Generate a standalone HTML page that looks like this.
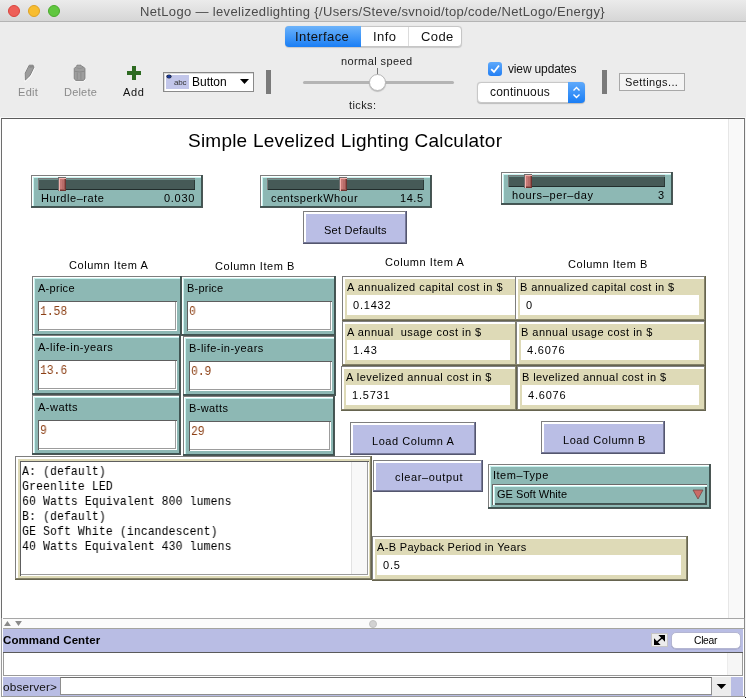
<!DOCTYPE html>
<html><head><meta charset="utf-8">
<style>
*{box-sizing:border-box;margin:0;padding:0}
html,body{width:746px;height:698px;overflow:hidden;background:#ececec;font-family:"Liberation Sans",sans-serif;color:#000}
.a{position:absolute}
.t{position:absolute;white-space:nowrap;will-change:transform}
.lbl{position:absolute;font-size:11px;white-space:nowrap;line-height:13px;letter-spacing:0.4px;will-change:transform}
#titlebar{left:0;top:0;width:746px;height:22px;background:linear-gradient(#ebebeb,#d6d6d6);border-bottom:1px solid #b4b4b4}
.dot{position:absolute;top:5px;width:12px;height:12px;border-radius:50%}
#title{left:140px;top:4px;white-space:nowrap;font-size:13px;letter-spacing:0.34px;color:#4a4a4a;will-change:transform}
#panel{left:1px;top:118px;width:744px;height:501px;background:#fff;border-top:1px solid #5c5c5c;border-left:1px solid #6e6e6e;border-right:1px solid #777}
</style></head><body>
<div id="titlebar" class="a"></div>
<div class="dot" style="left:8px;background:#ee5f58;border:1px solid #d9443d"></div>
<div class="dot" style="left:28px;background:#f8bd2f;border:1px solid #dea224"></div>
<div class="dot" style="left:48px;background:#60c73f;border:1px solid #4aaa2c"></div>
<div id="title" class="a">NetLogo — levelizedlighting {/Users/Steve/svnoid/top/code/NetLogo/Energy}</div>
<!-- toolbar -->
<svg class="a" style="left:18px;top:60px" width="24" height="24" viewBox="18 60 24 24">
  <path d="M25.4 80.6 L25.2 73.6 L29.2 65.6 L33.1 65.6 L34.4 67.6 L30.4 76 Z" fill="none" stroke="#fff" stroke-width="1.6" opacity="0.8"/>
  <path d="M25.4 80 L25.2 73.2 L29.2 65.2 L33.1 65.2 L34 67.2 L30 75.5 Z" fill="#9c9c9c" stroke="#7c7c7c" stroke-width="0.9"/>
  <path d="M29.6 66 L33 66 L33.4 67.3 L29.3 68 Z" fill="#8a8a8a"/>
</svg>
<div class="lbl" style="left:18px;top:86px;font-size:11px;line-height:13px;letter-spacing:0.3px;color:#8a8a8a">Edit</div>
<svg class="a" style="left:68px;top:60px" width="24" height="24" viewBox="68 60 24 24">
  <path d="M77 65.6 L81 65.6 L81.5 66.6 L83.6 67.4 L85.2 69 L85.2 79 L83.6 80.8 L75.6 80.8 L74.2 79 L74.2 69 L75.6 67.4 L76.6 66.6 Z" fill="none" stroke="#fff" stroke-width="1.4" opacity="0.8"/>
  <path d="M77 65.2 L81 65.2 L81.5 66.2 L83.6 67 L85 68.6 L85 78.8 L83.4 80.4 L75.8 80.4 L74.2 78.8 L74.2 68.6 L75.6 67 L76.6 66.2 Z" fill="#9e9e9e" stroke="#7a7a7a" stroke-width="0.9"/>
  <path d="M74.6 71.3 Q79.6 72.6 84.6 71.3" stroke="#858585" stroke-width="0.8" fill="none"/>
  <path d="M77.3 72.5 L77.3 79.5 M80.9 72.5 L80.9 79.5" stroke="#888" stroke-width="0.8"/>
  <path d="M76.5 67.8 Q79.6 69.4 82.8 67.8" stroke="#8a8a8a" stroke-width="0.7" fill="none"/>
</svg>
<div class="lbl" style="left:64px;top:86px;font-size:11px;line-height:13px;letter-spacing:0.2px;color:#8a8a8a">Delete</div>
<div class="a" style="left:127px;top:71px;width:14px;height:4px;background:#2e6b22"></div>
<div class="a" style="left:132px;top:66px;width:4px;height:14px;background:#2e6b22"></div>
<div class="lbl" style="left:123px;top:86px;font-size:11px;line-height:13px;letter-spacing:0.6px;color:#111">Add</div>

<div class="a" style="left:163px;top:72px;width:91px;height:20px;background:#fff;border:1px solid #8a8a8a;box-shadow:inset 1px 1px 0 #dcdcdc"></div>
<div class="a" style="left:166px;top:75px;width:23px;height:14px;background:#c2c6ea"></div>
<div class="a" style="left:167px;top:75px;width:4px;height:3px;background:#1a3a9a;border-radius:50%;box-shadow:0 0 0 0.6px #222"></div>
<div class="lbl" style="left:173.5px;top:78.3px;font-size:8px;line-height:10px;letter-spacing:-0.15px;color:#333">abc</div>
<div class="lbl" style="left:192px;top:75px;font-size:12px;line-height:14px;letter-spacing:0">Button</div>
<svg class="a" style="left:240px;top:79px" width="10" height="6"><path d="M0 0 L9 0 L4.5 5 Z" fill="#000"/></svg>
<div class="a" style="left:266px;top:70px;width:5px;height:24px;background:#7a7a7a"></div>

<!-- tabs -->
<div class="a" style="left:285px;top:26px;width:177px;height:21px;background:#fff;border:1px solid #c6c6c6;border-radius:4px;box-shadow:0 0.5px 1px rgba(0,0,0,0.15)"></div>
<div class="a" style="left:285px;top:26px;width:76px;height:21px;background:linear-gradient(#6cb3fa,#1a7ef5);border-radius:4px 0 0 4px"></div>
<div class="a" style="left:408px;top:27px;width:1px;height:19px;background:#dcdcdc"></div>
<div class="lbl" style="left:295px;top:29px;font-size:13px;line-height:15px;color:#111">Interface</div>
<div class="lbl" style="left:373px;top:29px;font-size:13px;line-height:15px;color:#111">Info</div>
<div class="lbl" style="left:421px;top:29px;font-size:13px;line-height:15px;color:#111">Code</div>

<!-- speed slider -->
<div class="lbl" style="left:341px;top:55px;font-size:11px;color:#222">normal speed</div>
<div class="a" style="left:303px;top:81px;width:151px;height:3px;background:#b4b4b4;border-radius:2px"></div>
<div class="a" style="left:377px;top:68px;width:1px;height:7px;background:#777"></div>
<div class="a" style="left:369px;top:74px;width:17px;height:17px;border-radius:50%;background:#fff;border:1px solid #b8b8b8;box-shadow:0 1px 1px rgba(0,0,0,0.2)"></div>
<div class="lbl" style="left:349px;top:98.5px;font-size:11px;color:#222">ticks:</div>

<!-- view updates -->
<div class="a" style="left:488px;top:62px;width:14px;height:14px;border-radius:3px;background:linear-gradient(#5ea9fb,#237ff4)"></div>
<svg class="a" style="left:488px;top:62px" width="14" height="14"><path d="M3.2 7.2 L6 10 L11 3.5" stroke="#fff" stroke-width="1.8" fill="none"/></svg>
<div class="lbl" style="left:508px;top:62px;font-size:12px;line-height:14px;letter-spacing:-0.15px;color:#111">view updates</div>
<div class="a" style="left:477px;top:82px;width:108px;height:21px;background:#fff;border:1px solid #c8c8c8;border-radius:4px;box-shadow:0 0.5px 1px rgba(0,0,0,0.2)"></div>
<div class="a" style="left:568px;top:82px;width:17px;height:21px;background:linear-gradient(#5ea9fb,#1a7ef5);border-radius:0 4px 4px 0"></div>
<svg class="a" style="left:571px;top:85px" width="11" height="15"><path d="M2.5 5.5 L5.5 2.5 L8.5 5.5 M2.5 9.5 L5.5 12.5 L8.5 9.5" stroke="#fff" stroke-width="1.4" fill="none"/></svg>
<div class="lbl" style="left:490px;top:85px;font-size:12px;line-height:14px;letter-spacing:0.2px;color:#111">continuous</div>
<div class="a" style="left:602px;top:70px;width:5px;height:24px;background:#7a7a7a"></div>
<div class="a" style="left:619px;top:73px;width:66px;height:18px;background:#f4f4f4;border:1px solid #a8a8a8"></div>
<div class="lbl" style="left:625px;top:76px;font-size:11px;line-height:13px;letter-spacing:0.4px;color:#111">Settings...</div>



<div id="panel" class="a"></div>
<div class="t" style="left:187.8px;top:129.22px;font-size:19px;line-height:24px;letter-spacing:0.22px;color:#000;">Simple Levelized Lighting Calculator</div>
<div class="a" style="left:31px;top:175px;width:172px;height:33px;background:#8db8b4;box-shadow:inset -1px -1px 0 #4b5654, inset -2px -2px 0 #3f5553, inset 1px 1px 0 #7e7e7e, inset 2px 2px 0 #fff, inset 3px 3px 0 #c8f4f0"></div>
<div class="a" style="left:38px;top:178px;width:157px;height:12px;background:#465a57;box-shadow:inset 1px 1px 0 #7a7a7a, inset 0 2px 0 #6f918d, inset 0 -1px 0 #222d2c, inset -1px 0 0 #2c3a38"></div>
<div class="a" style="left:58px;top:177px;width:8px;height:14px;background:#c67976;box-shadow:inset 1px 1px 0 #6e6e6e, inset 2px 2px 0 #f6b3ae, inset -1px -1px 0 #6e3431, inset -2px -2px 0 #9d5652"></div>
<div class="a" style="left:62px;top:180px;width:2px;height:9px;background:#b86c69"></div>
<div class="t" style="left:41.4px;top:190.59px;font-size:11px;line-height:14px;letter-spacing:0.55px;color:#000;">Hurdle&#8211;rate</div>
<div class="t" style="right:551px;top:190.59px;font-size:11px;line-height:14px;letter-spacing:0.7px;color:#000;">0.030</div>
<div class="a" style="left:260px;top:175px;width:172px;height:33px;background:#8db8b4;box-shadow:inset -1px -1px 0 #4b5654, inset -2px -2px 0 #3f5553, inset 1px 1px 0 #7e7e7e, inset 2px 2px 0 #fff, inset 3px 3px 0 #c8f4f0"></div>
<div class="a" style="left:267px;top:178px;width:157px;height:12px;background:#465a57;box-shadow:inset 1px 1px 0 #7a7a7a, inset 0 2px 0 #6f918d, inset 0 -1px 0 #222d2c, inset -1px 0 0 #2c3a38"></div>
<div class="a" style="left:339px;top:177px;width:8px;height:14px;background:#c67976;box-shadow:inset 1px 1px 0 #6e6e6e, inset 2px 2px 0 #f6b3ae, inset -1px -1px 0 #6e3431, inset -2px -2px 0 #9d5652"></div>
<div class="a" style="left:343px;top:180px;width:2px;height:9px;background:#b86c69"></div>
<div class="t" style="left:270.9px;top:190.59px;font-size:11px;line-height:14px;letter-spacing:0.5px;color:#000;">centsperkWhour</div>
<div class="t" style="right:322.6px;top:190.59px;font-size:11px;line-height:14px;letter-spacing:0.55px;color:#000;">14.5</div>
<div class="a" style="left:501px;top:172px;width:172px;height:33px;background:#8db8b4;box-shadow:inset -1px -1px 0 #4b5654, inset -2px -2px 0 #3f5553, inset 1px 1px 0 #7e7e7e, inset 2px 2px 0 #fff, inset 3px 3px 0 #c8f4f0"></div>
<div class="a" style="left:508px;top:175px;width:157px;height:12px;background:#465a57;box-shadow:inset 1px 1px 0 #7a7a7a, inset 0 2px 0 #6f918d, inset 0 -1px 0 #222d2c, inset -1px 0 0 #2c3a38"></div>
<div class="a" style="left:524px;top:174px;width:8px;height:14px;background:#c67976;box-shadow:inset 1px 1px 0 #6e6e6e, inset 2px 2px 0 #f6b3ae, inset -1px -1px 0 #6e3431, inset -2px -2px 0 #9d5652"></div>
<div class="a" style="left:528px;top:177px;width:2px;height:9px;background:#b86c69"></div>
<div class="t" style="left:511.6px;top:187.59px;font-size:11px;line-height:14px;letter-spacing:0.64px;color:#000;">hours&#8211;per&#8211;day</div>
<div class="t" style="right:81.60000000000002px;top:187.59px;font-size:11px;line-height:14px;letter-spacing:0.55px;color:#000;">3</div>
<div class="a" style="left:303px;top:211px;width:104px;height:33px;background:#babee5;box-shadow:inset -1px -1px 0 #54566e, inset -2px -2px 0 #777a9a, inset 1px 1px 0 #7e7e7e, inset 3px 3px 0 #fff"></div>
<div class="t" style="left:324.3px;top:223.19px;font-size:11px;line-height:14px;letter-spacing:0.24px;color:#000;">Set Defaults</div>
<div class="t" style="left:69.4px;top:258.29px;font-size:11px;line-height:14px;letter-spacing:0.55px;color:#000;">Column Item A</div>
<div class="t" style="left:215.3px;top:259.19px;font-size:11px;line-height:14px;letter-spacing:0.55px;color:#000;">Column Item B</div>
<div class="t" style="left:384.6px;top:255.09px;font-size:11px;line-height:14px;letter-spacing:0.55px;color:#000;">Column Item A</div>
<div class="t" style="left:568px;top:256.59px;font-size:11px;line-height:14px;letter-spacing:0.55px;color:#000;">Column Item B</div>
<div class="a" style="left:181px;top:276px;width:155px;height:60px;background:#8db8b4;box-shadow:inset -1px -1px 0 #4b5654, inset -2px -2px 0 #3f5553, inset 1px 1px 0 #7e7e7e, inset 2px 2px 0 #fff, inset 3px 3px 0 #c8f4f0"></div>
<div class="a" style="left:187px;top:301px;width:145px;height:30px;background:#fff;box-shadow:inset 1px 1px 0 #5e5e5e, inset -1px -1px 0 #fff, inset -2px -2px 0 #9c9c9c"></div>
<div class="t" style="left:187px;top:281.19px;font-size:11px;line-height:14px;letter-spacing:0.22px;color:#000;">B-price</div>
<div class="t" style="left:189px;top:303.94px;font-size:12.6px;line-height:16px;letter-spacing:0px;color:#8c3f14;font-family:'Liberation Mono',monospace;transform:scaleX(0.9);transform-origin:0 0;">0</div>
<div class="a" style="left:32px;top:276px;width:150px;height:60px;background:#8db8b4;box-shadow:inset -1px -1px 0 #4b5654, inset -2px -2px 0 #3f5553, inset 1px 1px 0 #7e7e7e, inset 2px 2px 0 #fff, inset 3px 3px 0 #c8f4f0"></div>
<div class="a" style="left:38px;top:301px;width:139px;height:30px;background:#fff;box-shadow:inset 1px 1px 0 #5e5e5e, inset -1px -1px 0 #fff, inset -2px -2px 0 #9c9c9c"></div>
<div class="t" style="left:38px;top:281.19px;font-size:11px;line-height:14px;letter-spacing:0.28px;color:#000;">A-price</div>
<div class="t" style="left:40px;top:303.94px;font-size:12.6px;line-height:16px;letter-spacing:0px;color:#8c3f14;font-family:'Liberation Mono',monospace;transform:scaleX(0.9);transform-origin:0 0;">1.58</div>
<div class="a" style="left:32px;top:335px;width:149px;height:60px;background:#8db8b4;box-shadow:inset -1px -1px 0 #4b5654, inset -2px -2px 0 #3f5553, inset 1px 1px 0 #7e7e7e, inset 2px 2px 0 #fff, inset 3px 3px 0 #c8f4f0"></div>
<div class="a" style="left:38px;top:360px;width:139px;height:30px;background:#fff;box-shadow:inset 1px 1px 0 #5e5e5e, inset -1px -1px 0 #fff, inset -2px -2px 0 #9c9c9c"></div>
<div class="t" style="left:38px;top:340.19px;font-size:11px;line-height:14px;letter-spacing:0.5px;color:#000;">A-life-in-years</div>
<div class="t" style="left:40px;top:362.94px;font-size:12.6px;line-height:16px;letter-spacing:0px;color:#8c3f14;font-family:'Liberation Mono',monospace;transform:scaleX(0.9);transform-origin:0 0;">13.6</div>
<div class="a" style="left:183px;top:336px;width:153px;height:60px;background:#8db8b4;box-shadow:inset -1px -1px 0 #4b5654, inset -2px -2px 0 #3f5553, inset 1px 1px 0 #7e7e7e, inset 2px 2px 0 #fff, inset 3px 3px 0 #c8f4f0"></div>
<div class="a" style="left:189px;top:361px;width:143px;height:30px;background:#fff;box-shadow:inset 1px 1px 0 #5e5e5e, inset -1px -1px 0 #fff, inset -2px -2px 0 #9c9c9c"></div>
<div class="t" style="left:189px;top:341.19px;font-size:11px;line-height:14px;letter-spacing:0.46px;color:#000;">B-life-in-years</div>
<div class="t" style="left:191px;top:363.94px;font-size:12.6px;line-height:16px;letter-spacing:0px;color:#8c3f14;font-family:'Liberation Mono',monospace;transform:scaleX(0.9);transform-origin:0 0;">0.9</div>
<div class="a" style="left:32px;top:395px;width:149px;height:60px;background:#8db8b4;box-shadow:inset -1px -1px 0 #4b5654, inset -2px -2px 0 #3f5553, inset 1px 1px 0 #7e7e7e, inset 2px 2px 0 #fff, inset 3px 3px 0 #c8f4f0"></div>
<div class="a" style="left:38px;top:420px;width:139px;height:30px;background:#fff;box-shadow:inset 1px 1px 0 #5e5e5e, inset -1px -1px 0 #fff, inset -2px -2px 0 #9c9c9c"></div>
<div class="t" style="left:38px;top:400.19px;font-size:11px;line-height:14px;letter-spacing:0.48px;color:#000;">A-watts</div>
<div class="t" style="left:40px;top:422.94px;font-size:12.6px;line-height:16px;letter-spacing:0px;color:#8c3f14;font-family:'Liberation Mono',monospace;transform:scaleX(0.9);transform-origin:0 0;">9</div>
<div class="a" style="left:183px;top:396px;width:152px;height:60px;background:#8db8b4;box-shadow:inset -1px -1px 0 #4b5654, inset -2px -2px 0 #3f5553, inset 1px 1px 0 #7e7e7e, inset 2px 2px 0 #fff, inset 3px 3px 0 #c8f4f0"></div>
<div class="a" style="left:189px;top:421px;width:142px;height:30px;background:#fff;box-shadow:inset 1px 1px 0 #5e5e5e, inset -1px -1px 0 #fff, inset -2px -2px 0 #9c9c9c"></div>
<div class="t" style="left:189px;top:401.19px;font-size:11px;line-height:14px;letter-spacing:0.38px;color:#000;">B-watts</div>
<div class="t" style="left:191px;top:423.94px;font-size:12.6px;line-height:16px;letter-spacing:0px;color:#8c3f14;font-family:'Liberation Mono',monospace;transform:scaleX(0.9);transform-origin:0 0;">29</div>
<div class="a" style="left:342px;top:276px;width:179px;height:45px;background:#dedab7;box-shadow:inset -1px -1px 0 #66644f, inset -2px -2px 0 #858269, inset 1px 1px 0 #7e7e7e, inset 3px 3px 0 #fff"></div>
<div class="a" style="left:347px;top:295px;width:168px;height:20px;background:#fff;"></div>
<div class="t" style="left:347.2px;top:279.79px;font-size:11px;line-height:14px;letter-spacing:0.47px;color:#000;">A annualized capital cost in $</div>
<div class="t" style="left:352.8px;top:297.89px;font-size:11px;line-height:14px;letter-spacing:0.8px;color:#000;">0.1432</div>
<div class="a" style="left:342px;top:321px;width:175px;height:45px;background:#dedab7;box-shadow:inset -1px -1px 0 #66644f, inset -2px -2px 0 #858269, inset 1px 1px 0 #7e7e7e, inset 3px 3px 0 #fff"></div>
<div class="a" style="left:347px;top:340px;width:163px;height:20px;background:#fff;"></div>
<div class="t" style="left:347.2px;top:324.79px;font-size:11px;line-height:14px;letter-spacing:0.47px;color:#000;">A annual&nbsp; usage cost in $</div>
<div class="t" style="left:352.8px;top:342.89px;font-size:11px;line-height:14px;letter-spacing:0.8px;color:#000;">1.43</div>
<div class="a" style="left:341px;top:366px;width:176px;height:45px;background:#dedab7;box-shadow:inset -1px -1px 0 #66644f, inset -2px -2px 0 #858269, inset 1px 1px 0 #7e7e7e, inset 3px 3px 0 #fff"></div>
<div class="a" style="left:346px;top:385px;width:164px;height:20px;background:#fff;"></div>
<div class="t" style="left:346.2px;top:369.79px;font-size:11px;line-height:14px;letter-spacing:0.47px;color:#000;">A levelized annual cost in $</div>
<div class="t" style="left:351.8px;top:387.89px;font-size:11px;line-height:14px;letter-spacing:0.8px;color:#000;">1.5731</div>
<div class="a" style="left:515px;top:276px;width:191px;height:45px;background:#dedab7;box-shadow:inset -1px -1px 0 #66644f, inset -2px -2px 0 #858269, inset 1px 1px 0 #7e7e7e, inset 3px 3px 0 #fff"></div>
<div class="a" style="left:520px;top:295px;width:179px;height:20px;background:#fff;"></div>
<div class="t" style="left:520.2px;top:279.79px;font-size:11px;line-height:14px;letter-spacing:0.4px;color:#000;">B annualized capital cost in $</div>
<div class="t" style="left:525.8px;top:297.89px;font-size:11px;line-height:14px;letter-spacing:0.8px;color:#000;">0</div>
<div class="a" style="left:516px;top:321px;width:190px;height:45px;background:#dedab7;box-shadow:inset -1px -1px 0 #66644f, inset -2px -2px 0 #858269, inset 1px 1px 0 #7e7e7e, inset 3px 3px 0 #fff"></div>
<div class="a" style="left:521px;top:340px;width:178px;height:20px;background:#fff;"></div>
<div class="t" style="left:521.2px;top:324.79px;font-size:11px;line-height:14px;letter-spacing:0.47px;color:#000;">B annual usage cost in $</div>
<div class="t" style="left:526.8px;top:342.89px;font-size:11px;line-height:14px;letter-spacing:0.8px;color:#000;">4.6076</div>
<div class="a" style="left:517px;top:366px;width:189px;height:45px;background:#dedab7;box-shadow:inset -1px -1px 0 #66644f, inset -2px -2px 0 #858269, inset 1px 1px 0 #7e7e7e, inset 3px 3px 0 #fff"></div>
<div class="a" style="left:522px;top:385px;width:177px;height:20px;background:#fff;"></div>
<div class="t" style="left:522.2px;top:369.79px;font-size:11px;line-height:14px;letter-spacing:0.4px;color:#000;">B levelized annual cost in $</div>
<div class="t" style="left:527.8px;top:387.89px;font-size:11px;line-height:14px;letter-spacing:0.8px;color:#000;">4.6076</div>
<div class="a" style="left:350px;top:422px;width:126px;height:33px;background:#babee5;box-shadow:inset -1px -1px 0 #54566e, inset -2px -2px 0 #777a9a, inset 1px 1px 0 #7e7e7e, inset 3px 3px 0 #fff"></div>
<div class="t" style="left:372px;top:433.79px;font-size:11px;line-height:14px;letter-spacing:0.55px;color:#000;">Load Column A</div>
<div class="a" style="left:541px;top:421px;width:124px;height:33px;background:#babee5;box-shadow:inset -1px -1px 0 #54566e, inset -2px -2px 0 #777a9a, inset 1px 1px 0 #7e7e7e, inset 3px 3px 0 #fff"></div>
<div class="t" style="left:563px;top:432.79px;font-size:11px;line-height:14px;letter-spacing:0.55px;color:#000;">Load Column B</div>
<div class="a" style="left:373px;top:460px;width:110px;height:32px;background:#babee5;box-shadow:inset -1px -1px 0 #54566e, inset -2px -2px 0 #777a9a, inset 1px 1px 0 #7e7e7e, inset 3px 3px 0 #fff"></div>
<div class="t" style="left:394.5px;top:470.49px;font-size:11px;line-height:14px;letter-spacing:0.64px;color:#000;">clear&#8211;output</div>
<div class="a" style="left:488px;top:464px;width:223px;height:45px;background:#8db8b4;box-shadow:inset -1px -1px 0 #4b5654, inset -2px -2px 0 #3f5553, inset 1px 1px 0 #7e7e7e, inset 2px 2px 0 #fff, inset 3px 3px 0 #c8f4f0"></div>
<div class="a" style="left:492px;top:484px;width:215px;height:21px;box-shadow:inset 1px 1px 0 #6a6a6a, inset 2px 2px 0 #fff, inset 3px 3px 0 #c8f4f0, inset -1px -1px 0 #4b5654, inset -2px -2px 0 #3f5553"></div>
<div class="t" style="left:492.7px;top:468.09px;font-size:11px;line-height:14px;letter-spacing:0.5px;color:#000;">Item&#8211;Type</div>
<div class="t" style="left:496.5px;top:486.99px;font-size:11px;line-height:14px;letter-spacing:0.03px;color:#000;">GE Soft White</div>
<svg class="a" style="left:692px;top:489px" width="12" height="11"><path d="M1 1 L11 1 L6 10 Z" fill="#c96a66" stroke="#6b4040" stroke-width="0.7"/></svg>
<div class="a" style="left:15px;top:456px;width:357px;height:124px;background:#dedab7;box-shadow:inset -1px -1px 0 #66644f, inset -2px -2px 0 #858269, inset 1px 1px 0 #7e7e7e, inset 3px 3px 0 #fff"></div>
<div class="a" style="left:20px;top:461px;width:349px;height:115px;background:#fff;box-shadow:inset 1px 1px 0 #5e5e5e, inset -1px -1px 0 #fff, inset -2px -2px 0 #9c9c9c"></div>
<div class="a" style="left:351px;top:462px;width:16px;height:112px;background:#f8f8f8;border-left:1px solid #e2e2e2"></div>
<div class="t" style="left:22.2px;top:462.66px;font-size:13.3px;line-height:17px;letter-spacing:0px;color:#000;font-family:'Liberation Mono',monospace;transform:scaleX(0.875);transform-origin:0 0;">A: (default)</div>
<div class="t" style="left:22.2px;top:477.66px;font-size:13.3px;line-height:17px;letter-spacing:0px;color:#000;font-family:'Liberation Mono',monospace;transform:scaleX(0.875);transform-origin:0 0;">Greenlite LED</div>
<div class="t" style="left:22.2px;top:492.66px;font-size:13.3px;line-height:17px;letter-spacing:0px;color:#000;font-family:'Liberation Mono',monospace;transform:scaleX(0.875);transform-origin:0 0;">60 Watts Equivalent 800 lumens</div>
<div class="t" style="left:22.2px;top:507.66px;font-size:13.3px;line-height:17px;letter-spacing:0px;color:#000;font-family:'Liberation Mono',monospace;transform:scaleX(0.875);transform-origin:0 0;">B: (default)</div>
<div class="t" style="left:22.2px;top:522.66px;font-size:13.3px;line-height:17px;letter-spacing:0px;color:#000;font-family:'Liberation Mono',monospace;transform:scaleX(0.875);transform-origin:0 0;">GE Soft White (incandescent)</div>
<div class="t" style="left:22.2px;top:537.66px;font-size:13.3px;line-height:17px;letter-spacing:0px;color:#000;font-family:'Liberation Mono',monospace;transform:scaleX(0.875);transform-origin:0 0;">40 Watts Equivalent 430 lumens</div>
<div class="a" style="left:372px;top:536px;width:316px;height:45px;background:#dedab7;box-shadow:inset -1px -1px 0 #66644f, inset -2px -2px 0 #858269, inset 1px 1px 0 #7e7e7e, inset 3px 3px 0 #fff"></div>
<div class="a" style="left:377px;top:555px;width:304px;height:20px;background:#fff;"></div>
<div class="t" style="left:377.2px;top:539.79px;font-size:11px;line-height:14px;letter-spacing:0.33px;color:#000;">A-B Payback Period in Years</div>
<div class="t" style="left:382.8px;top:557.89px;font-size:11px;line-height:14px;letter-spacing:0.8px;color:#000;">0.5</div>
<!-- right strip -->
<div class="a" style="left:728px;top:119px;width:16px;height:499px;background:#f9f9f9;border-left:1px solid #e6e6e6;border-right:1px solid #fdfdfd"></div>
<div class="a" style="left:0;top:117px;width:746px;height:1px;background:#f8f8f8"></div>
<div class="a" style="left:0;top:117px;width:1px;height:581px;background:#f8f8f8"></div>
<div class="a" style="left:745px;top:117px;width:1px;height:581px;background:#f4f4f4"></div>

<!-- bottom -->
<div class="a" style="left:1px;top:618px;width:744px;height:80px;background:#fff"></div>
<div class="a" style="left:3px;top:618px;width:741px;height:1px;background:#a6a6a6"></div>
<div class="a" style="left:2px;top:619px;width:742px;height:9px;background:#fbfbfb"></div>
<svg class="a" style="left:0;top:614px" width="30" height="16" viewBox="0 614 30 16"><path d="M4 626 L7.45 621 L10.9 626 Z M15.1 621 L21.9 621 L18.5 626 Z" fill="#8a8a8a"/></svg>
<div class="a" style="left:369px;top:620px;width:8px;height:8px;border-radius:50%;background:#d2d2d2;border:1px solid #c2c2c2"></div>
<div class="a" style="left:3px;top:628px;width:741px;height:1px;background:#a4a4a0"></div>
<div class="a" style="left:3px;top:629px;width:740px;height:23px;background:#b9bde4"></div>
<div class="lbl" style="left:3px;top:633px;font-size:11.5px;line-height:14px;font-weight:bold;letter-spacing:0.1px">Command Center</div>
<div class="a" style="left:651px;top:633px;width:17px;height:14px;background:#ececec;border:1px solid #c4c4c4"></div>
<svg class="a" style="left:654px;top:635px" width="11" height="10"><path d="M6 0.5 L10.5 0.5 L10.5 5 Z M0.5 5 L0.5 9.5 L5 9.5 Z M2 8 L9 2" stroke="#000" stroke-width="1.6" fill="#000"/></svg>
<div class="a" style="left:671px;top:632px;width:70px;height:17px;background:#fff;border:1px solid #b4b6d2;border-radius:5px;box-shadow:0 0.5px 0.5px rgba(0,0,0,0.15)"></div>
<div class="lbl" style="left:694px;top:634px;font-size:10.3px;line-height:13px;letter-spacing:-0.3px">Clear</div>
<div class="a" style="left:3px;top:652px;width:740px;height:1px;background:#5a5a5a"></div>
<div class="a" style="left:3px;top:653px;width:740px;height:23px;background:#fff;border-left:1px solid #9a9a9a;border-right:1px solid #9a9a9a;border-bottom:1px solid #9a9a9a"></div>
<div class="a" style="left:727px;top:653px;width:15px;height:22px;background:#f6f6f6;border-left:1px solid #ececec"></div>
<div class="a" style="left:3px;top:677px;width:740px;height:19px;background:#b9bde4"></div>
<div class="lbl" style="left:3.3px;top:679.5px;font-size:11.8px;line-height:14px;letter-spacing:0.15px;color:#111">observer&gt;</div>
<div class="a" style="left:60px;top:677px;width:652px;height:18px;background:#fff;border:1px solid #8e8e8e;border-top-color:#6e6e6e"></div>
<div class="a" style="left:712px;top:677px;width:19px;height:19px;background:#ececec"></div>
<svg class="a" style="left:700px;top:670px" width="46" height="28" viewBox="700 670 46 28"><path d="M716.7 683.9 L726.2 683.9 L721.45 689.1 Z" fill="#000"/></svg>
<div class="a" style="left:1px;top:696px;width:744px;height:1px;background:#9a9a9a"></div>
<div class="a" style="left:1px;top:618px;width:1px;height:79px;background:#9a9a9a"></div>
<div class="a" style="left:744px;top:618px;width:1px;height:79px;background:#8a8a8a"></div>
<div class="a" style="left:745px;top:697px;width:1px;height:1px;background:#000"></div>

</body></html>
